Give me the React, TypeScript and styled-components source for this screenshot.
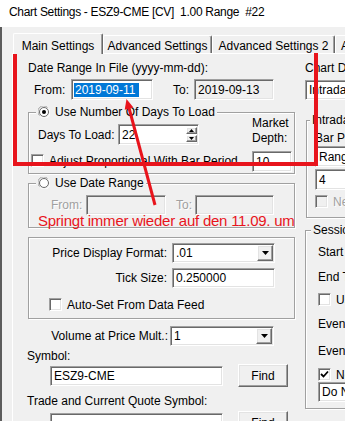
import React from "react";
import styled, { createGlobalStyle, css } from "styled-components";

const GlobalStyle = createGlobalStyle`
  html, body { margin: 0; padding: 0; background: #f0f0f0; }
  body { font-family: "Liberation Sans", Arial, sans-serif; font-size: 12px; color: #000; }
  * { box-sizing: border-box; }
`;

const sunken = css`
  border: 1px solid;
  border-color: #a0a0a0 #fff #fff #a0a0a0;
  box-shadow: inset 1px 1px 0 #696969, inset -1px -1px 0 #e3e3e3;
`;

const raised = css`
  border: 1px solid;
  border-color: #fff #696969 #696969 #fff;
  box-shadow: inset -1px -1px 0 #a0a0a0, inset 1px 1px 0 #e3e3e3;
  background: #f0f0f0;
`;

const Screen = styled.div`
  position: relative;
  width: 345px;
  height: 421px;
  overflow: hidden;
  background: #f0f0f0;
`;

const TitleBar = styled.div`
  height: 27px;
  background: #fff;
  display: flex;
  align-items: center;
  padding: 0 0 3px 9px;
  font-size: 12px;
  letter-spacing: -0.3px;
  white-space: pre;
`;

const Body = styled.div`
  height: 394px;
  border-left: 2px solid #5c5c5c;
  padding-top: 6px;
`;

const TabStrip = styled.div`
  display: flex;
  align-items: flex-end;
  height: 20px;
  padding-left: 11px;
  position: relative;
  z-index: 1;
`;

const Tab = styled.div<{ $w: number; $active?: boolean }>`
  flex: none;
  width: ${(p) => p.$w}px;
  height: ${(p) => (p.$active ? 21 : 18)}px;
  margin-bottom: ${(p) => (p.$active ? -1 : 0)}px;
  padding-bottom: ${(p) => (p.$active ? 1 : 0)}px;
  border-top: 1px solid #fff;
  border-left: 1px solid #fff;
  border-right: 1px solid #696969;
  box-shadow: inset -1px 0 0 #a0a0a0;
  border-radius: 2px 2px 0 0;
  background: #f0f0f0;
  display: flex;
  align-items: flex-end;
  justify-content: ${(p) => (p.$w > 60 ? "center" : "flex-start")};
  padding-left: ${(p) => (p.$w > 60 ? 0 : 5)}px;
  line-height: 14px;
  white-space: nowrap;
  overflow: hidden;
`;

const Panel = styled.div`
  margin-left: 10px;
  width: 360px;
  height: 368px;
  border-top: 1px solid #fff;
  border-left: 1px solid #fff;
  display: flex;
  align-items: flex-start;
  padding: 7px 0 0 14px;
`;

const LeftCol = styled.div`
  flex: none;
  width: 268px;
  display: flex;
  flex-direction: column;
`;

const RightCol = styled.div`
  flex: none;
  width: 200px;
  margin-left: 10px;
  display: flex;
  flex-direction: column;
`;

const Label = styled.div<{ $mt?: number; $pl?: number; $disabled?: boolean }>`
  line-height: 14px;
  height: 14px;
  white-space: nowrap;
  margin-top: ${(p) => p.$mt ?? 0}px;
  padding-left: ${(p) => p.$pl ?? 0}px;
  ${(p) =>
    p.$disabled &&
    css`
      color: #a0a0a0;
      text-shadow: 1px 1px 0 #fff;
    `}
`;

const Row = styled.div<{ $mt?: number; $pl?: number; $h?: number }>`
  display: flex;
  align-items: center;
  height: ${(p) => p.$h ?? 21}px;
  margin-top: ${(p) => p.$mt ?? 0}px;
  padding-left: ${(p) => p.$pl ?? 0}px;
`;

const FieldLabel = styled.span<{ $w: number; $ml?: number; $disabled?: boolean }>`
  flex: none;
  width: ${(p) => p.$w}px;
  margin-left: ${(p) => p.$ml ?? 0}px;
  line-height: 14px;
  white-space: nowrap;
  ${(p) =>
    p.$disabled &&
    css`
      color: #a0a0a0;
      text-shadow: 1px 1px 0 #fff;
    `}
`;

const Field = styled.div<{ $w: number; $h?: number; $gray?: boolean }>`
  ${sunken};
  flex: none;
  position: relative;
  width: ${(p) => p.$w}px;
  height: ${(p) => p.$h ?? 21}px;
  background: ${(p) => (p.$gray ? "#f0f0f0" : "#fff")};
  display: flex;
  align-items: center;
  padding-left: 2px;
  line-height: 14px;
  white-space: nowrap;
  overflow: hidden;
`;

const Selected = styled.span`
  background: #0078d7;
  color: #fff;
  padding: 0 3px 0 1px;
`;

const FieldText = styled.span`
  flex: 1;
  padding-left: 1px;
  overflow: hidden;
`;

const ArrowButton = styled.div`
  ${raised};
  flex: none;
  width: 16px;
  align-self: stretch;
  margin: 1px 1px 1px 0;
  display: flex;
  align-items: center;
  justify-content: center;
`;

const Spinner = styled.div`
  flex: none;
  width: 11px;
  align-self: stretch;
  margin: 2px 1px 2px 0;
  display: flex;
  flex-direction: column;
  gap: 1px;
`;

const SpinButton = styled.div`
  ${raised};
  flex: 1;
  display: flex;
  align-items: center;
  justify-content: center;
`;

const Button = styled.div<{ $ml?: number }>`
  ${raised};
  flex: none;
  width: 50px;
  height: 23px;
  margin-left: ${(p) => p.$ml ?? 0}px;
  display: flex;
  align-items: center;
  justify-content: center;
  line-height: 14px;
`;

const Group = styled.div<{ $mt: number; $ml?: number; $w: number; $h: number }>`
  position: relative;
  flex: none;
  margin-top: ${(p) => p.$mt}px;
  margin-left: ${(p) => p.$ml ?? 0}px;
  width: ${(p) => p.$w}px;
  height: ${(p) => p.$h}px;
  border: 1px solid #a0a0a0;
  box-shadow: inset 1px 1px 0 #fff, 1px 1px 0 #fff;
`;

const Legend = styled.div<{ $left: number }>`
  position: absolute;
  top: -8px;
  left: ${(p) => p.$left}px;
  height: 14px;
  padding: 0 2px;
  background: #f0f0f0;
  display: flex;
  align-items: center;
  gap: 5px;
  line-height: 14px;
  white-space: nowrap;
`;

const GroupRow = styled.div`
  display: flex;
  align-items: flex-start;
`;

const Stack = styled.div<{ $mt?: number; $pl?: number }>`
  display: flex;
  flex-direction: column;
  margin-top: ${(p) => p.$mt ?? 0}px;
  padding-left: ${(p) => p.$pl ?? 0}px;
`;

const MarketDepth = styled.div`
  margin-left: auto;
  margin-right: 2px;
  margin-top: 3px;
  display: flex;
  flex-direction: column;
`;

const TwoLine = styled.div`
  line-height: 15px;
`;

const FormGrid = styled.div<{ $label: number; $field: number; $gap: number; $mt: number }>`
  display: grid;
  grid-template-columns: ${(p) => p.$label}px ${(p) => p.$field}px;
  grid-auto-rows: 20px;
  column-gap: ${(p) => p.$gap}px;
  row-gap: 5px;
  align-items: center;
  margin-top: ${(p) => p.$mt}px;
`;

const RightLabel = styled.span`
  text-align: right;
  line-height: 14px;
  white-space: nowrap;
`;

const CheckRow = styled.div<{ $mt?: number; $ml?: number; $disabled?: boolean }>`
  display: flex;
  align-items: center;
  gap: 5px;
  height: 13px;
  margin-top: ${(p) => p.$mt ?? 0}px;
  margin-left: ${(p) => p.$ml ?? 0}px;
  line-height: 14px;
  white-space: nowrap;
  ${(p) =>
    p.$disabled &&
    css`
      color: #a0a0a0;
      text-shadow: 1px 1px 0 #fff;
    `}
`;

const Box = styled.span<{ $disabled?: boolean }>`
  ${sunken};
  flex: none;
  width: 13px;
  height: 13px;
  background: ${(p) => (p.$disabled ? "#f0f0f0" : "#fff")};
  display: flex;
  align-items: center;
  justify-content: center;
`;

const RadioWrap = styled.span`
  flex: none;
  width: 12px;
  height: 12px;
  display: flex;
`;

const RedFrame = styled.div`
  position: absolute;
  left: 13px;
  top: 40px;
  width: 305px;
  height: 126px;
  border: 4px solid #e8141c;
  pointer-events: none;
`;

const RedArrow = styled.svg`
  position: absolute;
  left: 0;
  top: 0;
  pointer-events: none;
`;

const RedNote = styled.div`
  position: absolute;
  left: 38px;
  top: 213px;
  font-size: 15px;
  line-height: 15px;
  letter-spacing: -0.24px;
  color: #e8141c;
  white-space: nowrap;
`;

const DownTri = () => (
  <svg width="7" height="4" viewBox="0 0 7 4">
    <path d="M0 0H7L3.5 4Z" fill="#000" />
  </svg>
);

const SmallTri = ({ up }: { up?: boolean }) => (
  <svg width="5" height="3" viewBox="0 0 5 3">
    <path d={up ? "M0 3H5L2.5 0Z" : "M0 0H5L2.5 3Z"} fill="#000" />
  </svg>
);

const Radio = ({ checked }: { checked?: boolean }) => (
  <RadioWrap>
    <svg width="12" height="12" viewBox="0 0 12 12">
      <path d="M1.5 9.5A5.5 5.5 0 0 1 9.5 1.5" stroke="#a0a0a0" fill="none" />
      <path d="M10.5 2.5A5.5 5.5 0 0 1 2.5 10.5" stroke="#fff" fill="none" />
      <circle cx="6" cy="6" r="4.5" fill="#fff" stroke="#696969" strokeWidth="1" />
      {checked && <circle cx="6" cy="6" r="2" fill="#000" />}
    </svg>
  </RadioWrap>
);

const Check = ({ checked, disabled }: { checked?: boolean; disabled?: boolean }) => (
  <Box $disabled={disabled}>
    {checked && (
      <svg width="9" height="9" viewBox="0 0 9 9">
        <path d="M1 4L3.5 6.5L8 1.5" stroke="#000" strokeWidth="1.8" fill="none" />
      </svg>
    )}
  </Box>
);

const Combo = ({ w, h = 20, text }: { w: number; h?: number; text: string }) => (
  <Field $w={w} $h={h}>
    <FieldText>{text}</FieldText>
    <ArrowButton>
      <DownTri />
    </ArrowButton>
  </Field>
);

export default function App() {
  return (
    <Screen>
      <GlobalStyle />
      <TitleBar>Chart Settings - ESZ9-CME [CV]  1.00 Range  #22</TitleBar>
      <Body>
        <TabStrip>
          <Tab $w={90} $active>Main Settings</Tab>
          <Tab $w={109}>Advanced Settings</Tab>
          <Tab $w={123}>Advanced Settings 2</Tab>
          <Tab $w={40}>Advanced Settings 3</Tab>
        </TabStrip>
        <Panel>
          <LeftCol>
            <Label $pl={1}>Date Range In File (yyyy-mm-dd):</Label>
            <Row $mt={4}>
              <FieldLabel $w={37} $ml={7}>From:</FieldLabel>
              <Field $w={82}>
                <Selected>2019-09-11</Selected>
              </Field>
              <FieldLabel $w={21} $ml={20}>To:</FieldLabel>
              <Field $w={80} $gray>
                <FieldText>2019-09-13</FieldText>
              </Field>
            </Row>

            <Group $mt={12} $ml={1} $w={267} $h={62}>
              <Legend $left={7}>
                <Radio checked />
                <span>Use Number Of Days To Load</span>
              </Legend>
              <GroupRow>
                <Stack $mt={11} $pl={9}>
                  <Row>
                    <FieldLabel $w={80}>Days To Load:</FieldLabel>
                    <Field $w={81}>
                      <FieldText>22</FieldText>
                      <Spinner>
                        <SpinButton>
                          <SmallTri up />
                        </SpinButton>
                        <SpinButton>
                          <SmallTri />
                        </SpinButton>
                      </Spinner>
                    </Field>
                  </Row>
                  <CheckRow $mt={9} $ml={-7}>
                    <Check />
                    <span>Adjust Proportional With Bar Period</span>
                  </CheckRow>
                </Stack>
                <MarketDepth>
                  <TwoLine>
                    Market
                    <br />
                    Depth:
                  </TwoLine>
                  <Field $w={40} style={{ marginTop: 5 }}>
                    <FieldText>10</FieldText>
                  </Field>
                </MarketDepth>
              </GroupRow>
            </Group>

            <Group $mt={9} $ml={1} $w={267} $h={45}>
              <Legend $left={7}>
                <Radio />
                <span>Use Date Range</span>
              </Legend>
              <Row $mt={11} $pl={22} $h={20}>
                <FieldLabel $w={35} $disabled>
                  From:
                </FieldLabel>
                <Field $w={80} $h={20} $gray />
                <FieldLabel $w={19} $ml={10} $disabled>
                  To:
                </FieldLabel>
                <Field $w={79} $h={20} $gray />
              </Row>
            </Group>

            <Group $mt={9} $ml={1} $w={267} $h={82}>
              <FormGrid $label={138} $field={103} $gap={5} $mt={5}>
                <RightLabel>Price Display Format:</RightLabel>
                <Combo w={103} text=".01" />
                <RightLabel>Tick Size:</RightLabel>
                <Field $w={103} $h={20}>
                  <FieldText>0.250000</FieldText>
                </Field>
              </FormGrid>
              <CheckRow $mt={10} $ml={20}>
                <Check />
                <span>Auto-Set From Data Feed</span>
              </CheckRow>
            </Group>

            <FormGrid $label={141} $field={104} $gap={2} $mt={7}>
              <RightLabel>Volume at Price Mult.:</RightLabel>
              <Combo w={104} text="1" />
            </FormGrid>

            <Label $mt={3}>Symbol:</Label>
            <Row $mt={1} $pl={23} $h={23}>
              <Field $w={173} $h={20}>
                <FieldText>ESZ9-CME</FieldText>
              </Field>
              <Button $ml={15}>Find</Button>
            </Row>

            <Label $mt={7}>Trade and Current Quote Symbol:</Label>
            <Row $mt={3} $pl={23} $h={23}>
              <Field $w={173} $h={20} />
              <Button $ml={15}>Find</Button>
            </Row>
          </LeftCol>

          <RightCol>
            <Label>Chart Data Type:</Label>
            <div style={{ marginTop: 5 }}>
              <Combo w={180} text="Intraday Chart" />
            </div>

            <Group $mt={20} $ml={1} $w={190} $h={98}>
              <Legend $left={3}>Intraday Chart Bar Period</Legend>
              <Stack $pl={8}>
                <Label $mt={10}>Bar Period Type:</Label>
                <div style={{ marginTop: 1 }}>
                  <Combo w={160} h={21} text="Range Bar" />
                </div>
                <Field $w={80} style={{ marginTop: 2 }}>
                  <FieldText>4</FieldText>
                </Field>
                <CheckRow $mt={5} $disabled>
                  <Check disabled />
                  <span>New Bar At Session Start</span>
                </CheckRow>
              </Stack>
            </Group>

            <Group $mt={12} $w={190} $h={179}>
              <Legend $left={5}>Session Times</Legend>
              <Stack $pl={12}>
                <Label $mt={14}>Start Time:</Label>
                <Label $mt={11}>End Time:</Label>
                <CheckRow $mt={9}>
                  <Check />
                  <span>Use Evening Session</span>
                </CheckRow>
                <Label $mt={11}>Evening Start Time:</Label>
                <Label $mt={13}>Evening End Time:</Label>
                <CheckRow $mt={10}>
                  <Check checked />
                  <span>New Bar At Session Start</span>
                </CheckRow>
                <Field $w={150} $h={20} style={{ marginTop: 1 }}>
                  <FieldText>Do Not Use</FieldText>
                </Field>
              </Stack>
            </Group>
          </RightCol>
        </Panel>
      </Body>

      <RedFrame />
      <RedArrow width="345" height="421" viewBox="0 0 345 421">
        <line x1="155" y1="205" x2="129" y2="108" stroke="#e8141c" strokeWidth="3" />
        <polygon points="126.5,99 133.4,107.5 124.7,109.8" fill="#e8141c" />
      </RedArrow>
      <RedNote>Springt immer wieder auf den 11.09. um</RedNote>
    </Screen>
  );
}
